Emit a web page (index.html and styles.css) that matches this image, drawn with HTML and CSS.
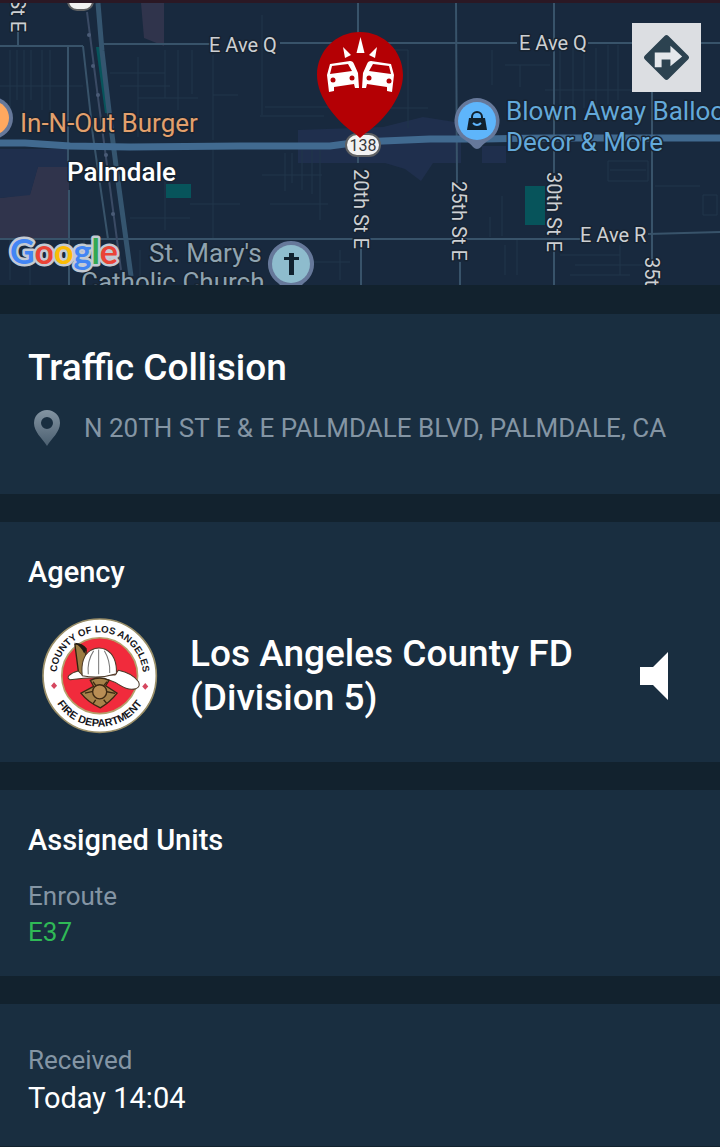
FILE: index.html
```html
<!DOCTYPE html>
<html lang="en">
<head>
    <meta charset="UTF-8">
    <meta name="viewport" content="width=device-width, initial-scale=1.0">
    <title>Traffic Collision</title>
    <link rel="stylesheet" href="styles.css">
</head>
<body>
    <div class="map">
        <svg class="map-canvas" viewBox="0 3 720 282" preserveAspectRatio="xMidYMid slice" role="img" aria-label="Map of Palmdale">
            <!-- Areas -->
            <g class="area">
                <path d="M141 3h23v43l-20-8z"/>
                <path d="M0 198l30-4 8-28h31v72H0z"/>
            </g>
            <g class="area-blue">
                <path d="M0 149h69v18H38l-8 28-30 3z"/>
                <path d="M298 130l85-3 40-10 38 6v40h-28l-12 18-16-12-20-6h-87z"/>
                <path d="M482 146h24v17h-24z"/>
            </g>
            <g class="park">
                <path d="M96 47h5l8 66h-4z"/>
                <path d="M166 184h25v14h-25z"/>
                <path d="M525 186h20v39h-20z"/>
            </g>

            <!-- Small streets -->
            <path class="street" d="M0 86h83M10 50v60M17 50v50M24 50v60M31 50v50M42 50v60M50 50v60M120 86h50M138 57v80M165 50v48M178 50v60M192 50v44M138 98h60M110 73h55M213 55v85M213 95h25M165 180v50M130 218h60M213 150v88M190 204h50M262 15v100M265 107h65M260 116h64M285 153v38M292 153v30M302 150v40M312 150v44M320 150v70M262 175h60M270 204h58M408 50v78M370 50h38M368 108h60M505 65h45M492 50v35M520 65v22M560 45v60M573 48v60M584 48v60M596 48v60M608 45v60M618 45v55M545 90h90M608 161h40v20h-40zM610 170h36M655 186h45M703 195h14v20h-14zM490 217v20M502 196v40M10 240v40M30 260v25M84 240v45M140 250v30M505 245v30M517 240v35M560 255h60M575 265h80M570 275h60M340 250v30M310 262h40M620 245v30"/>

            <!-- Avenues -->
            <g class="road">
                <path d="M0 46h83M101 44h110M280 43h237M588 43h132"/>
                <path d="M0 239h580M648 234l72-2"/>
                <path d="M18 30v16M68 46v117M69 190v95M358 3v160M361 245v40"/>
                <path d="M456 3l1 180M460 262v23M554 3v170M554 250v35M652 90v170"/>
                <path d="M83 46l10 90 15 103"/>
            </g>
            <path class="rail" d="M87 12l10 78 8 60 12 90 4 30"/>
            <g class="rail-dots">
                <circle cx="89" cy="35" r="2"/>
                <circle cx="93" cy="66" r="2"/>
                <circle cx="98" cy="95" r="2"/>
                <circle cx="106" cy="155" r="2"/>
                <circle cx="113" cy="214" r="2"/>
            </g>
            <path class="highway-thin" d="M98 3l4 48 8 68 8 62 13 95"/>
            <path class="highway" d="M0 143h25l45 3 60 1 110-1h90l30-4 70-3h55l60-1h175"/>

            <!-- Road labels -->
            <g class="label">
                <text x="209" y="52">E Ave Q</text>
                <text x="519" y="50">E Ave Q</text>
                <text x="580" y="242">E Ave R</text>
                <text transform="translate(354 169) rotate(90)">20th St E</text>
                <text transform="translate(452 181) rotate(90)">25th St E</text>
                <text transform="translate(547 172) rotate(90)">30th St E</text>
                <text transform="translate(645 257) rotate(90)">35th St E</text>
                <text transform="translate(11 32) rotate(90)" text-anchor="end">10th St E</text>
            </g>

            <!-- Places -->
            <circle class="poi-ring" cx="-8" cy="118" r="21"/>
            <circle class="poi-food" cx="-8" cy="118" r="17"/>
            <text class="place food" x="20" y="132">In-N-Out Burger</text>
            <text class="place city" x="67" y="181">Palmdale</text>
            <text class="place church" x="149" y="262">St. Mary's</text>
            <text class="place church" x="81" y="291">Catholic Church</text>
            <text class="place shop" x="506" y="120">Blown Away Balloons</text>
            <text class="place shop" x="506" y="151">Decor &amp; More</text>

            <path class="poi-ring" d="M477 98a23 23 0 0 1 15 40c-6 4-9 6-11 9q-4 4-8 0c-2-3-5-5-11-9a23 23 0 0 1 15-40z"/>
            <circle class="poi-shop" cx="477" cy="121" r="19"/>
            <path class="poi-glyph" d="M469 118h16l2 12h-20z"/>
            <path class="bag-handle" d="M472 119v-2a5 5 0 0 1 10 0v2"/>
            <path class="bag-smile" d="M473 123q4 4 8 0"/>

            <path class="poi-ring" d="M291 241a23 23 0 0 1 13 42l-4 4h-18l-4-4a23 23 0 0 1 13-42z"/>
            <circle class="poi-church" cx="291" cy="264" r="19"/>
            <path class="poi-glyph" d="M289 253h5v4h5v3h-5v15h-5v-15h-5v-3h5z"/>

            <rect class="shield" x="68" y="-11" width="25" height="21" rx="9"/>
            <rect class="shield" x="346" y="134" width="34" height="22" rx="11"/>
            <text class="shield-text" x="363" y="151">138</text>

            <!-- Incident pin -->
            <path class="pin" d="M360 32c24 0 43 19 43 43 0 23-20 45-33 55q-6 4-10 8-4-4-10-8c-13-10-33-32-33-55 0-24 19-43 43-43z"/>
            <g class="pin-glyph">
                <path d="M360.500 37l4 16h-8zM343 47l8 8-6 3zM377 47l-8 8 6 3z"/>
                <path fill-rule="evenodd" d="M330 64l20-3q3 0 4 3l4 9 1 15h-4l-1-4-20 3 0 4-5 1-2-17zM332 66l-2 8 22-3-4-7z"/>
                <path fill-rule="evenodd" d="M391 64l-20-3q-3 0-4 3l-4 9-1 15h4l1-4 20 3 0 4 5 1 2-17zM389 66l2 8-22-3 4-7z"/>
            </g>
            <g class="pin-lamp">
                <circle cx="333" cy="80" r="2.500"/>
                <circle cx="352" cy="78" r="2.500"/>
                <circle cx="369" cy="78" r="2.500"/>
                <circle cx="389" cy="81" r="2.500"/>
            </g>

            <text class="google" x="10" y="264"><tspan class="g-blue">G</tspan><tspan class="g-red">o</tspan><tspan class="g-yellow">o</tspan><tspan class="g-blue">g</tspan><tspan class="g-green">l</tspan><tspan class="g-red">e</tspan></text>
        </svg>
        <button class="directions" aria-label="Directions">
            <svg viewBox="0 0 48 48">
                <path fill="#2c4250" d="M22 2q2-2 4 0l20 20q2 2 0 4L26 46q-2 2-4 0L2 26q-2-2 0-4z"/>
                <path fill="#e4e7eb" d="M12 34V19h16v-7l12 11-12 10v-7H19v8z"/>
            </svg>
        </button>
    </div>

    <main>
        <section class="card incident">
            <h1>Traffic Collision</h1>
            <div class="address">
                <svg class="address-icon" viewBox="0 0 26 36">
                    <defs>
                        <linearGradient id="pinFade" x1="0" y1="0" x2="0" y2="1">
                            <stop offset="0" stop-color="#8394a2"/>
                            <stop offset="1" stop-color="#4b5f70"/>
                        </linearGradient>
                    </defs>
                    <path fill="url(#pinFade)" fill-rule="evenodd" d="M13 0a13 13 0 0 1 13 13c0 9-8 15-13 23C8 28 0 22 0 13A13 13 0 0 1 13 0zM13 7a6 6 0 1 0 0 12 6 6 0 0 0 0-12z"/>
                </svg>
                <p>N 20TH ST E &amp; E PALMDALE BLVD, PALMDALE, CA</p>
            </div>
        </section>

        <section class="card agency">
            <h2>Agency</h2>
            <div class="agency-row">
                <svg class="seal" viewBox="36 40 346 346" role="img" aria-label="County of Los Angeles Fire Department">
                    <defs>
                        <path id="arcTop" d="M79 212a129 129 0 0 1 258 0"/>
                        <path id="arcBottom" d="M56 212a152 152 0 0 0 304 0"/>
                    </defs>
                    <circle cx="208" cy="212" r="169" fill="#fff" stroke="#9b8f68" stroke-width="5"/>
                    <circle cx="208" cy="212" r="113" fill="#f12b3c" stroke="#b5a06c" stroke-width="5"/>
                    <text class="seal-text"><textPath href="#arcTop" startOffset="50%">COUNTY OF LOS ANGELES</textPath></text>
                    <text class="seal-text bottom"><textPath href="#arcBottom" startOffset="50%">FIRE DEPARTMENT</textPath></text>
                    <path fill="#d5475f" d="M72 232l9 10-9 10-9-10zM344 234l9 10-9 10-9-10z"/>
                    <!-- Helmet -->
                    <path fill="#9c7c42" stroke="#30220f" stroke-width="4" d="M134 118q20-2 34 18l-8 76h-14z"/>
                    <path fill="#201a14" d="M132 114q26 0 38 18l-8 14q-8-20-30-32z"/>
                    <path fill="#fff" stroke="#4d3b2a" stroke-width="3" d="M116 212q10-10 28-14l12 12h98l10-14q40 8 60 34 6 14-6 20-22 8-50-10-30-20-68-22-40 0-80 6-10-4-4-12z"/>
                    <path fill="#fff" stroke="#4d3b2a" stroke-width="3" d="M156 212q-6-56 26-76 22-12 44-2 34 18 32 72-50 16-102 6z"/>
                    <path fill="none" stroke="#777" stroke-width="3" d="M190 138q-20 30-16 70M205 134v74M222 138q18 30 16 66"/>
                    <!-- Badge -->
                    <path fill="#a7824a" stroke="#3c2913" stroke-width="4" d="M180 226q28-14 56 0l-10 16 34 22q-20 26-50 44-36-16-58-44l38-20z"/>
                    <path fill="none" stroke="#3c2913" stroke-width="4" d="M164 264l24-5M230 260l24 5M196 284l-8 12M220 284l10 12M188 230l10 14M230 230l-12 14"/>
                    <circle cx="208" cy="260" r="21" fill="#b98e55" stroke="#3c2913" stroke-width="4"/>
                </svg>
                <p class="agency-name">Los Angeles County FD (Division 5)</p>
                <button class="speaker" aria-label="Listen">
                    <svg viewBox="0 0 28 48">
                        <path fill="#fff" d="M0 15h13L28 0v48L13 33H0z"/>
                    </svg>
                </button>
            </div>
        </section>

        <section class="card units">
            <h2>Assigned Units</h2>
            <dl>
                <dt>Enroute</dt>
                <dd class="unit">E37</dd>
            </dl>
        </section>

        <section class="card received">
            <dl>
                <dt>Received</dt>
                <dd>Today 14:04</dd>
            </dl>
        </section>
    </main>
</body>
</html>
```
FILE: styles.css
```css
:root {
    --color-bg: #12222e;
    --color-card: #192e40;
    --color-map: #18293e;
    --color-muted: #8495a4;
    --color-green: #2fb956;
}

* {
    box-sizing: border-box;
    margin: 0;
    padding: 0;
}

body {
    background: var(--color-bg);
    color: #fff;
    font-family: 'Roboto', sans-serif;
    border-top: 3px solid #2b1824;
}

button {
    background: none;
    border: none;
    cursor: pointer;
}

svg {
    display: block;
}

/* Map */
.map {
    position: relative;
    height: 282px;
    background: var(--color-map);
    overflow: hidden;
}

.map-canvas {
    width: 100%;
    height: 100%;
}

.area {
    fill: #30344c;
}

.area-blue {
    fill: #1f2f4d;
}

.park {
    fill: #07545b;
}

.street {
    fill: none;
    stroke: #20364a;
    stroke-width: 1;
}

.road {
    fill: none;
    stroke: #38536a;
    stroke-width: 2;
}

.rail {
    fill: none;
    stroke: #3a4a64;
    stroke-width: 2;
}

.rail-dots {
    fill: #4a5b76;
}

.highway,
.highway-thin {
    fill: none;
    stroke: #416a90;
    stroke-width: 7;
}

.highway-thin {
    stroke: #35556f;
    stroke-width: 5;
}

.label,
.place {
    stroke: #172331;
    stroke-width: 3px;
    stroke-linejoin: round;
    paint-order: stroke;
}

.label {
    fill: #cdd0d3;
    font-size: 20px;
}

.place {
    font-size: 26px;
}

.food {
    fill: #e3a06c;
}

.city {
    fill: #fff;
    font-weight: 500;
}

.church {
    fill: #8fa3b0;
}

.shop {
    fill: #63a9da;
}

.poi-ring {
    fill: #66789a;
}

.poi-food {
    fill: #ffa85f;
}

.poi-shop {
    fill: #5eb5fb;
}

.poi-church {
    fill: #8ebccd;
}

.poi-glyph {
    fill: #10212e;
}

.bag-handle,
.bag-smile {
    fill: none;
    stroke: #10212e;
    stroke-width: 2;
}

.bag-smile {
    stroke: #5eb5fb;
}

.shield {
    fill: #f2f2f2;
    stroke: #5f6163;
    stroke-width: 2;
}

.shield-text {
    fill: #35383b;
    font-size: 16px;
    text-anchor: middle;
}

.pin {
    fill: #b40004;
}

.pin-glyph {
    fill: #fff;
}

.pin-lamp {
    fill: #b40004;
}

.google {
    font-family: 'Lato', sans-serif;
    font-size: 34px;
    font-weight: 700;
    stroke: #c3cad3;
    stroke-width: 5px;
    stroke-linejoin: round;
    paint-order: stroke;
}

.g-blue {
    fill: #4285f4;
}

.g-red {
    fill: #ea4335;
}

.g-yellow {
    fill: #fbbc05;
}

.g-green {
    fill: #34a853;
}

.directions {
    position: absolute;
    top: 20px;
    right: 19px;
    width: 69px;
    height: 69px;
    padding: 11px;
    background: #dcdee2;
}

/* Cards */
main {
    display: flex;
    flex-direction: column;
    gap: 28px;
    padding: 29px 0 4px;
}

.card {
    background: var(--color-card);
    padding: 32px 28px;
}

h1 {
    font-size: 37px;
    font-weight: 500;
    line-height: 44px;
}

h2 {
    font-size: 29px;
    font-weight: 500;
    line-height: 36px;
}

.incident {
    padding-bottom: 48px;
}

.address {
    display: flex;
    align-items: center;
    gap: 24px;
    margin-top: 20px;
    padding-left: 6px;
    color: var(--color-muted);
    font-size: 26px;
    line-height: 36px;
}

.address-icon {
    flex: none;
    width: 26px;
    height: 36px;
}

.agency {
    padding-bottom: 28px;
}

.agency-row {
    display: flex;
    align-items: center;
    margin-top: 28px;
    padding: 0 24px 0 14px;
}

.seal {
    flex: none;
    width: 116px;
    height: 116px;
}

.seal-text {
    fill: #15151a;
    font-family: 'Liberation Sans', sans-serif;
    font-size: 29px;
    font-weight: 700;
    text-anchor: middle;
}

.seal-text.bottom {
    font-size: 32px;
}

.agency-name {
    flex: 1;
    margin: 0 32px;
    font-size: 37px;
    font-weight: 500;
    line-height: 44px;
}

.speaker {
    flex: none;
    width: 28px;
    height: 48px;
}

.units {
    padding-bottom: 26px;
}

.units dl {
    margin-top: 20px;
}

dt {
    color: var(--color-muted);
    font-size: 26px;
    line-height: 36px;
}

dd {
    font-size: 29px;
    line-height: 40px;
}

.unit {
    color: var(--color-green);
    font-size: 26px;
    line-height: 36px;
}

.received {
    padding: 38px 28px 28px;
}
```
